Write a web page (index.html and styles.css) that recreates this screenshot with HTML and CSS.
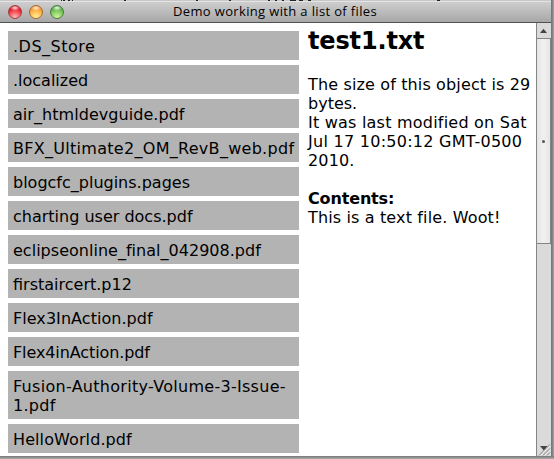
FILE: index.html
```html
<!DOCTYPE html>
<html lang="en">
<head>
<meta charset="utf-8">
<title>Demo working with a list of files</title>
<link rel="stylesheet" href="styles.css">
</head>
<body>
<div class="window">
  <header class="titlebar">
    <div class="lights">
      <i class="light red"></i><i class="light yellow"></i><i class="light green"></i>
    </div>
    <div class="title">Demo working with a list of files</div>
    <svg class="behind" width="554" height="2" viewBox="0 0 554 2">
      <path fill="#222" d="M61 0h1v1h-1zM63 0h2v1h-2zM68 0h2v1h-2zM72 0h1v1h-1zM124 0h2v1h-2zM196 0h2v1h-2zM229 0h2v1h-2zM268 0h2v1h-2zM275 0h2v1h-2zM282 0h2v1h-2zM290 0h6v1h-6zM299 0h4v1h-4zM308 0h3v1h-3zM437 0h3v1h-3z"/>
    </svg>
  </header>
  <main class="content">
    <ul class="files">
      <li><span class="f1">.DS_Store</span></li>
      <li>.localized</li>
      <li><span class="f3">air_htmldevguide.pdf</span></li>
      <li><span class="f4">BFX_Ultimate2_OM_RevB_web.pdf</span></li>
      <li>blogcfc_plugins.pages</li>
      <li>charting user docs.pdf</li>
      <li><span class="f7">eclipseonline_final_042908.pdf</span></li>
      <li>firstaircert.p12</li>
      <li><span class="f3">Flex3InAction.pdf</span></li>
      <li><span class="f10">Flex4inAction.pdf</span></li>
      <li><span class="f4">Fusion-Authority-Volume-3-Issue-<br>1.pdf</span></li>
      <li><span class="f12">HelloWorld.pdf</span></li>
    </ul>
    <section class="detail">
      <h2>test1.txt</h2>
      <p><span class="d1">The size of this object is 29</span><br>bytes.<br><span class="d3">It was last modified on Sat</span><br><span class="d4">Jul 17 10:50:12 GMT-0500</span><br><span class="d1">2010.</span></p>
      <p><b>Contents:</b><br><span class="d1">This is a text file. Woot!</span></p>
    </section>
    <div class="scrollbar">
      <div class="up"><svg width="14" height="15" viewBox="0 0 14 15"><path fill="#444" d="M3 10L6.500 5.800L10 10z"/></svg></div>
      <div class="thumb"><i></i></div>
      <div class="track"></div>
      <svg class="grip" width="14" height="14" viewBox="0 0 14 14"><path fill="#444" d="M3 4h7.500l-3.700 4.500z"/><path stroke="#fff" d="M3 13.500L13.500 3M7 13.500L13.500 7M11 13.500L13.500 11"/><path stroke="#777" d="M2 13.500L13 2.500M6 13.500L13 6.500M10 13.500L13 10.500"/></svg>
    </div>
  </main>
</div>
</body>
</html>
```

FILE: styles.css
```css
* { box-sizing: border-box; }
body {
  margin: 0;
  width: 554px;
  height: 459px;
  overflow: hidden;
  background: linear-gradient(#777, #aaa) 0 456px / 554px 3px no-repeat, linear-gradient(90deg, #777 0 552px, #aaa 554px);
  font: 16px/19px "DejaVu Sans", Verdana, sans-serif;
  color: #000;
}
.window { width: 551px; height: 456px; background: #fff; }
.titlebar {
  position: relative;
  height: 23px;
  display: flex;
  align-items: center;
  background: linear-gradient(#c8c8c8 0 1px, #e4e4e4 1px 2px, #cecece 2px, #a7a7a7 22px);
  border-bottom: 1px solid #515151;
}
.behind { position: absolute; left: 0; top: 0; }
.lights { display: flex; gap: 7px; padding: 2px 0 0 8px; width: 64px; }
.light { width: 14px; height: 14px; border-radius: 50%; flex: none; border: 1px solid; }
.red { border-color: #a13c40; background: radial-gradient(ellipse 5px 3px at 50% 15%, #ffe5e5, transparent), radial-gradient(circle at 50% 95%, #ffc0c0, #f3565c 45%, #e10e20 75%); }
.yellow { border-color: #ac6b33; background: radial-gradient(ellipse 5px 3px at 50% 15%, #fff5e0, transparent), radial-gradient(circle at 50% 95%, #fff49c, #fdb94f 50%, #ef8425 85%); }
.green { border-color: #4c7b3c; background: radial-gradient(ellipse 5px 3px at 50% 15%, #effbe8, transparent), radial-gradient(circle at 50% 95%, #d1f7a0, #83cd61 50%, #43993a 85%); }
.title {
  margin-left: 109px;
  font: 13px/18px "Open Sans", "Noto Sans", sans-serif;
  letter-spacing: 0.35px;
  white-space: nowrap;
}
.content { display: flex; height: 433px; }
.files {
  list-style: none;
  margin: 0 0 0 8px;
  padding: 8px 0 0;
  width: 291px;
  flex: none;
  display: flex;
  flex-direction: column;
  gap: 5px;
}
.files li { background: #b3b3b3; padding: 6px 5px 4px; white-space: nowrap; }
.f1 { letter-spacing: 0.5px; }
.f3 { letter-spacing: 0.05px; }
.f4 { letter-spacing: 0.29px; }
.f7 { letter-spacing: 0.02px; }
.f10 { letter-spacing: -0.1px; }
.f12 { letter-spacing: 0.1px; }
.d1 { letter-spacing: 0.14px; }
.d3 { letter-spacing: 0.22px; }
.d4 { letter-spacing: 0.27px; }
.detail { margin-left: 9px; width: 228px; flex: none; white-space: nowrap; }
h2 { margin: 4px 0 19px; font-size: 24px; line-height: 29px; letter-spacing: -0.15px; }
.detail b { letter-spacing: -0.15px; }
.detail p { margin: 0 0 19px; }
.scrollbar {
  position: relative;
  width: 15px;
  flex: none;
  display: flex;
  flex-direction: column;
  border-left: 1px solid #858585;
  background: #dadada;
}
.up { height: 16px; border-bottom: 1px solid #858585; }
.up svg { display: block; }
.thumb {
  height: 205px;
  border: solid #858585;
  border-width: 0 1px 1px 0;
  background: linear-gradient(90deg, #e4e4e4, #f1f1f1 50%, #e5e5e5);
  display: flex;
  align-items: center;
  justify-content: center;
}
.thumb i { width: 3px; height: 3px; border-radius: 50%; background: #555; }
.track { flex: 1; }
.grip { position: absolute; right: 0; bottom: 0; }
```
